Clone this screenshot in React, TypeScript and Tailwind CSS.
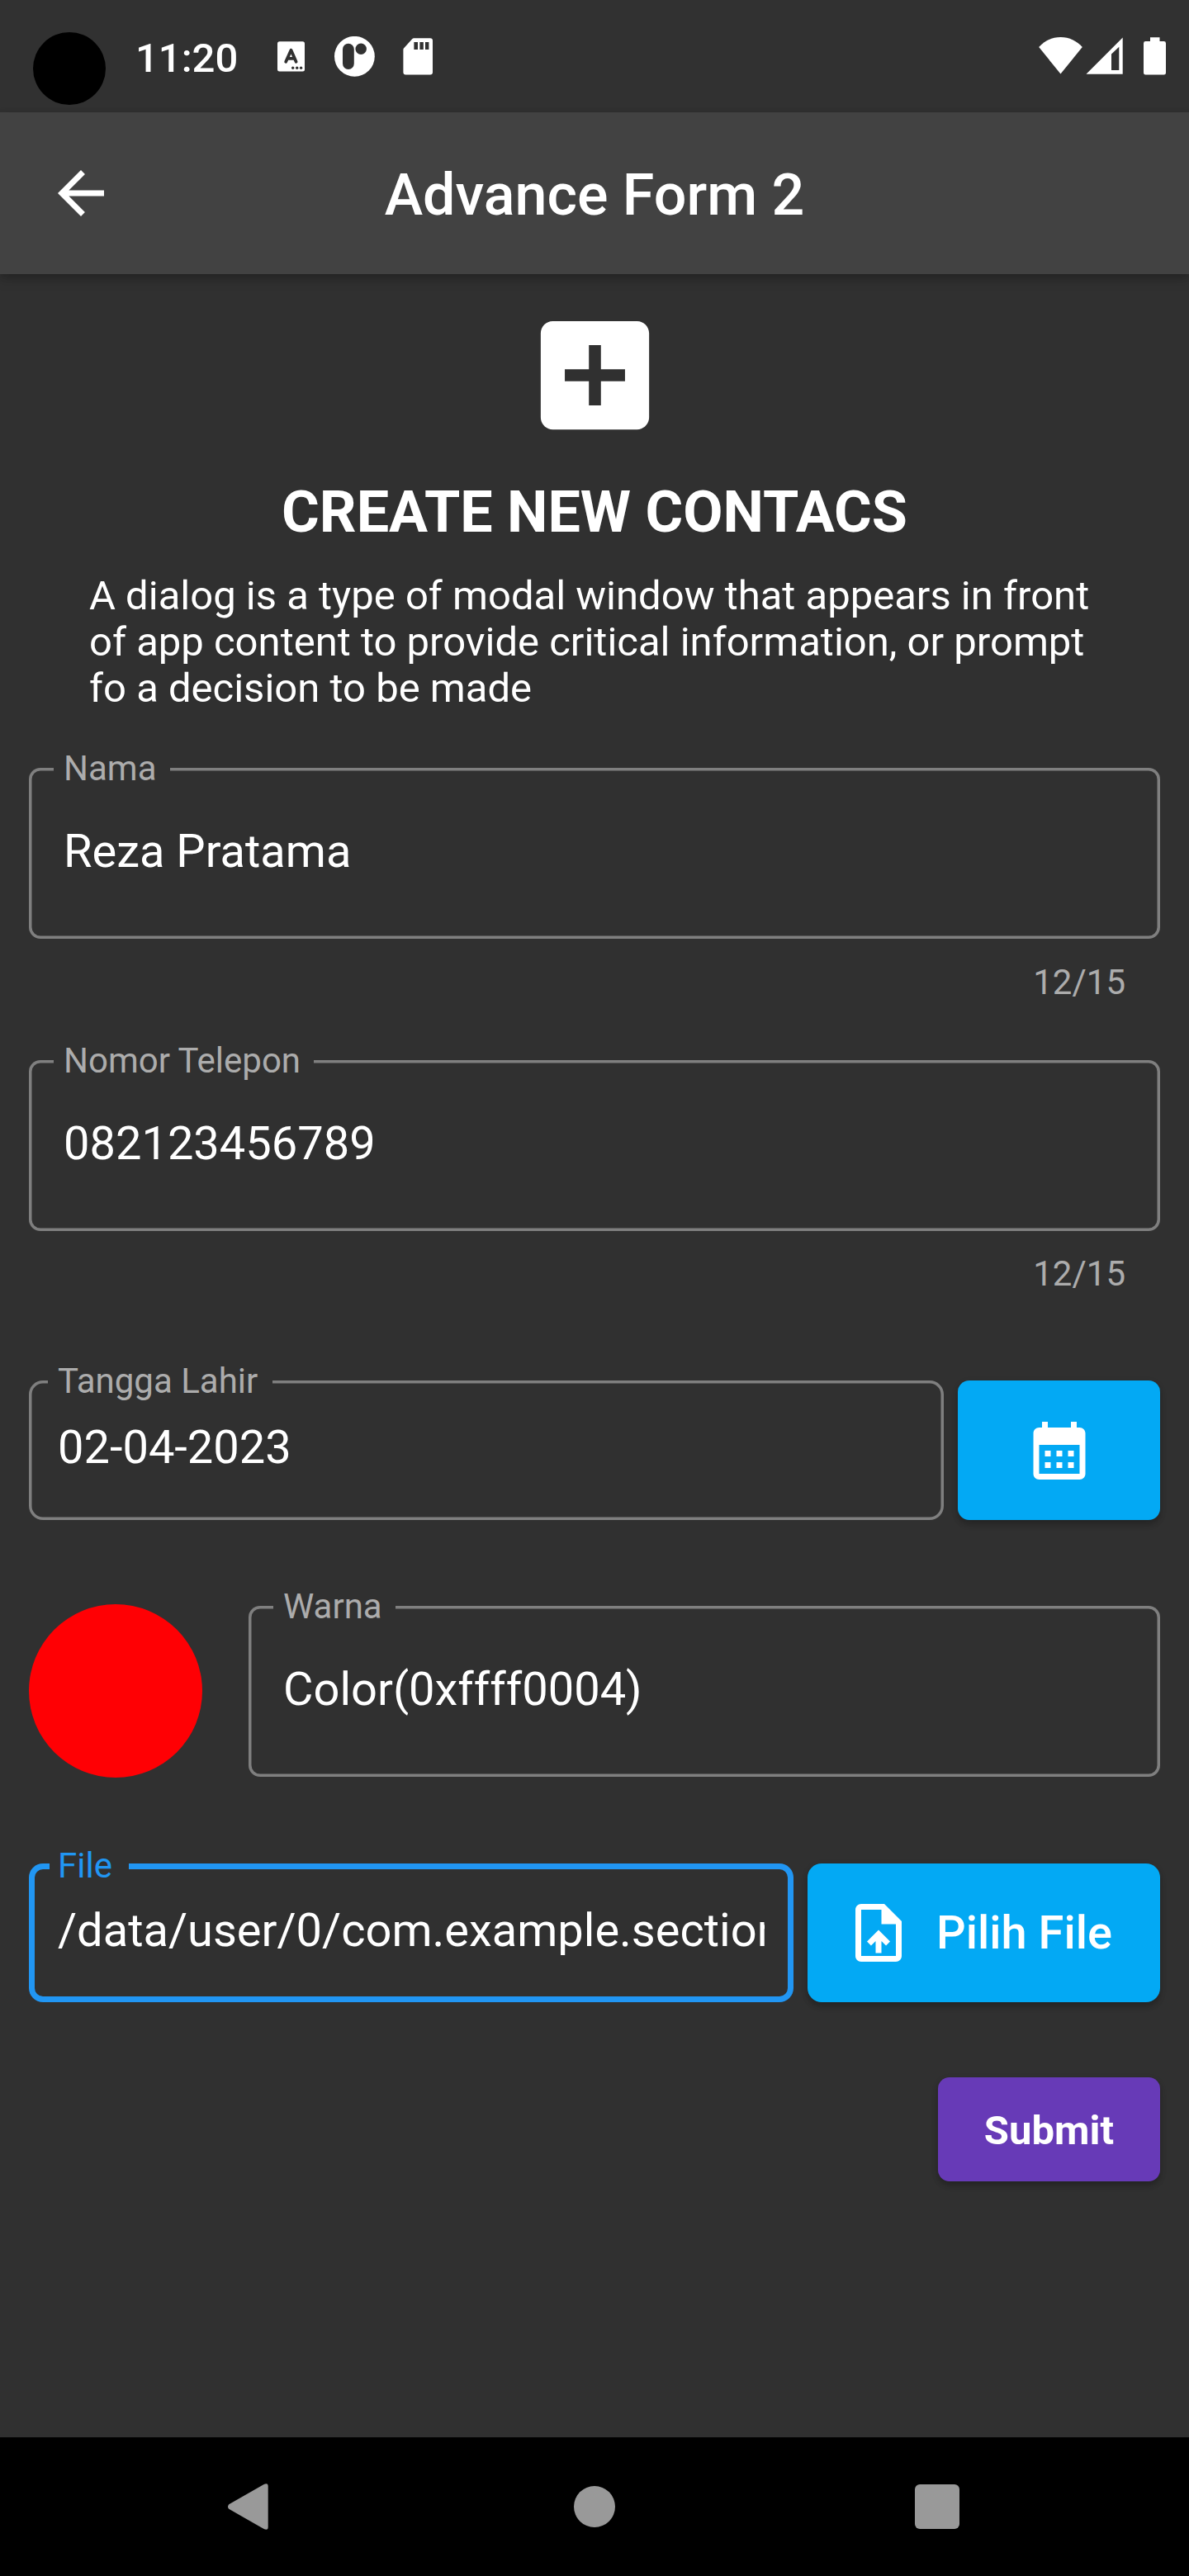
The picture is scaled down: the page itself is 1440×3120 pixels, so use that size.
import React from "react";
import type { ReactNode } from "react";

function NotificationIcons() {
  return (
    <div className="flex items-center">
      <svg className="h-[37px] w-[33px]" viewBox="0 0 33 37">
        <rect x="0" y="0.2" width="33" height="36.3" rx="2.5" fill="#fff" />
        <path
          d="M10.2 24.8 L16.5 10.8 L22.6 24.8 M12.5 20.8 H20.5"
          fill="none"
          stroke="#313131"
          strokeWidth="3.8"
          strokeLinecap="round"
          strokeLinejoin="round"
        />
        <circle cx="18.7" cy="32.2" r="1.7" fill="#313131" />
        <circle cx="23.7" cy="32.2" r="1.7" fill="#313131" />
        <circle cx="28.6" cy="32.2" r="1.7" fill="#313131" />
      </svg>
      <svg className="ml-9 h-[49px] w-[49px]" viewBox="0 0 49 49">
        <circle cx="24.4" cy="24.3" r="24.4" fill="#fff" />
        <rect x="10" y="8.8" width="13.8" height="31.2" rx="6.9" fill="#313131" />
        <circle cx="32.2" cy="15.3" r="6.7" fill="#313131" />
      </svg>
      <svg className="ml-[34px] h-[45px] w-9" viewBox="0 0 36 45">
        <path
          d="M13.2 0.2 H33 a3 3 0 0 1 3 3 V41.6 a3 3 0 0 1 -3 3 H3.4 a3 3 0 0 1 -3 -3 V14.2 a2.6 2.6 0 0 1 0.8 -1.9 L11.4 1 a2.6 2.6 0 0 1 1.8 -0.8 Z"
          fill="#fff"
        />
        <path d="M13.4 5 h4.6 v9 h-4.6 Z M20.4 5 h4.4 v9 h-4.4 Z M27 5 h4.4 v9 h-4.4 Z" fill="#313131" />
      </svg>
    </div>
  );
}

function SystemIcons() {
  return (
    <div className="flex items-start">
      <svg className="h-[45px] w-[53px]" viewBox="0 0 53 45">
        <path d="M26.5 44.6 L0.2 12 C7 4.6 16 0 26.5 0 S46 4.6 52.8 12 Z" fill="#fff" />
      </svg>
      <svg className="ml-1 h-[45px] w-[45px]" viewBox="0 0 45 45">
        <path fillRule="evenodd" d="M0.5 44.8 L44.7 0.4 V44.8 Z M31 20.5 V40.1 H40.3 V11.7 Z" fill="#fff" />
      </svg>
      <svg className="ml-[25px] h-[46px] w-[27px]" viewBox="0 0 27 46">
        <path
          d="M8 0.2 H19.5 V5 H24.6 a2.4 2.4 0 0 1 2.4 2.4 V43.2 a2.4 2.4 0 0 1 -2.4 2.4 H2.4 a2.4 2.4 0 0 1 -2.4 -2.4 V7.4 a2.4 2.4 0 0 1 2.4 -2.4 H8 Z"
          fill="#fff"
        />
      </svg>
    </div>
  );
}

function StatusBar() {
  return (
    <div className="relative flex h-[136px] items-start justify-between bg-[#313131] pr-7 pl-[164px]">
      <div className="absolute top-[39px] left-10 size-22 rounded-full bg-black" />
      <div className="flex">
        <div className="mt-[42px] w-[172px] text-[49px] leading-[57px] font-medium">11:20</div>
        <div className="mt-11">
          <NotificationIcons />
        </div>
      </div>
      <div className="mt-[45px]">
        <SystemIcons />
      </div>
    </div>
  );
}

function AppBar() {
  return (
    <header className="relative flex h-[196px] items-center justify-center bg-[#424242] shadow-[0_7px_14px_rgba(0,0,0,0.16),0_3px_8px_rgba(0,0,0,0.12)]">
      <svg className="absolute top-14 left-14 size-[84px]" viewBox="0 0 24 24" fill="#fff">
        <path d="M20 11H7.83l5.59-5.59L12 4l-8 8 8 8 1.41-1.41L7.83 13H20v-2z" />
      </svg>
      <h1 className="pt-[4px] text-[70px] leading-[82px] font-medium">Advance Form 2</h1>
    </header>
  );
}

type FieldProps = {
  label: string;
  value: string;
  className?: string;
  dense?: boolean;
  focused?: boolean;
};

function Field({ label, value, className = "", dense = false, focused = false }: FieldProps) {
  const outline = focused
    ? "rounded-[17px] shadow-[inset_0_0_0_7px_#2196f3]"
    : dense
      ? "rounded-[17px] shadow-[inset_0_0_0_3.5px_#7f7f7f]"
      : "rounded-[14px] shadow-[inset_0_0_0_3.5px_#7f7f7f]";
  const labelStyle = focused
    ? "-top-[22px] left-[25px] pr-[20px] pl-[10px] text-[#2196f3]"
    : dense
      ? "-top-6 left-[23px] pr-[18px] pl-3 text-[#acacac]"
      : "-top-6 left-[30px] pr-4 pl-3 text-[#acacac]";
  return (
    <div className={`relative min-w-0 ${outline} ${dense ? "px-[35px] pt-12" : "px-[42px] pt-[68px]"} ${className}`}>
      <label className={`absolute bg-[#303030] text-[42px] leading-[49px] whitespace-nowrap ${labelStyle}`}>{label}</label>
      <div className="overflow-hidden text-[56px] leading-[66px] whitespace-nowrap">{value}</div>
    </div>
  );
}

function Counter({ className, children }: { className: string; children: ReactNode }) {
  return <div className={`pr-[42px] text-right text-[42px] leading-[49px] text-[#acacac] ${className}`}>{children}</div>;
}

const raised = "shadow-[0_6px_7px_rgba(0,0,0,0.14),0_3px_8px_rgba(0,0,0,0.14)]";

function NavigationBar() {
  return (
    <nav className="mt-auto flex h-[168px] items-center bg-black px-[276px] text-[#999999]">
      <svg className="h-14 w-[49px]" viewBox="0 0 49 56" fill="currentColor">
        <path d="M1.2 25.2 L43.6 1 Q48.7 -1.5 48.7 3.5 V52.5 Q48.7 57.5 43.6 55 L1.2 30.8 Q-1.2 28 1.2 25.2 Z" />
      </svg>
      <div className="ml-[370px] size-[50px] rounded-full bg-[#999999]" />
      <div className="ml-[363px] h-[54px] w-[54px] shrink-0 rounded-[6px] bg-[#999999]" />
    </nav>
  );
}

export default function App() {
  return (
    <div className="flex h-[3120px] w-[1440px] flex-col overflow-hidden bg-[#303030] font-[Roboto,sans-serif] text-white">
      <StatusBar />
      <AppBar />
      <main className="flex flex-col px-[35px] pt-[35px]">
        <svg className="size-[175px] self-center" viewBox="0 0 24 24" fill="#fff">
          <path d="M19 3H5c-1.11 0-2 .9-2 2v14c0 1.1.89 2 2 2h14c1.1 0 2-.9 2-2V5c0-1.1-.9-2-2-2zm-2 10h-4v4h-2v-4H7v-2h4V7h2v4h4v2z" />
        </svg>
        <h2 className="mt-[37px] text-center text-[70px] leading-[82px] font-bold">CREATE NEW CONTACS</h2>
        <p className="mt-[33px] pr-[71px] pl-[73px] text-[49px] leading-[56px]">
          A dialog is a type of modal window that appears in front of app content to provide critical information, or
          prompt fo a decision to be made
        </p>

        <Field className="mt-[68px] h-[207px]" label="Nama" value="Reza Pratama" />
        <Counter className="mt-7">12/15</Counter>

        <Field className="mt-[70px] h-[207px]" label="Nomor Telepon" value="082123456789" />
        <Counter className="mt-[27px]">12/15</Counter>

        <div className="mt-[105px] flex h-[169px] gap-[17px]">
          <Field className="flex-1" dense label="Tangga Lahir" value="02-04-2023" />
          <button className={`flex w-[245px] items-center justify-center rounded-[14px] bg-[#03a9f4] ${raised}`}>
            <svg className="size-[84px]" viewBox="0 0 24 24" fill="#fff">
              <path d="M19 4h-1V2h-2v2H8V2H6v2H5c-1.11 0-1.99.9-1.99 2L3 20c0 1.1.89 2 2 2h14c1.1 0 2-.9 2-2V6c0-1.1-.9-2-2-2zm0 16H5V10h14v10zM9 14H7v-2h2v2zm4 0h-2v-2h2v2zm4 0h-2v-2h2v2zm-8 4H7v-2h2v2zm4 0h-2v-2h2v2zm4 0h-2v-2h2v2z" />
            </svg>
          </button>
        </div>

        <div className="mt-[102px] flex h-[210px] items-center gap-14">
          <div className="size-[210px] rounded-full bg-[#ff0004]" />
          <Field className="h-[207px] flex-1" label="Warna" value="Color(0xffff0004)" />
        </div>

        <div className="mt-[104px] flex h-[168px] gap-[17px]">
          <Field className="w-[926px]" dense focused label="File" value="/data/user/0/com.example.section" />
          <button
            className={`flex flex-1 items-center justify-center gap-7 rounded-[17px] bg-[#03a9f4] pr-14 pl-[42px] text-[56px] leading-[66px] font-medium whitespace-nowrap ${raised}`}
          >
            <svg className="size-[84px] shrink-0" viewBox="0 0 24 24" fill="#fff">
              <path d="M14 2H6c-1.1 0-1.99.9-1.99 2L4 20c0 1.1.89 2 1.99 2H18c1.1 0 2-.9 2-2V8l-6-6zm4 18H6V4h7v5h5v11zM8 15.01l1.41 1.41L11 14.84V19h2v-4.16l1.59 1.59L16 15.01 12.01 11z" />
            </svg>
            Pilih File
          </button>
        </div>

        <button
          className={`mt-[91px] flex h-[126px] items-center self-end rounded-[14px] bg-[#673ab7] px-14 pt-0.5 text-[49px] leading-[57px] font-bold ${raised}`}
        >
          Submit
        </button>
      </main>
      <NavigationBar />
    </div>
  );
}
